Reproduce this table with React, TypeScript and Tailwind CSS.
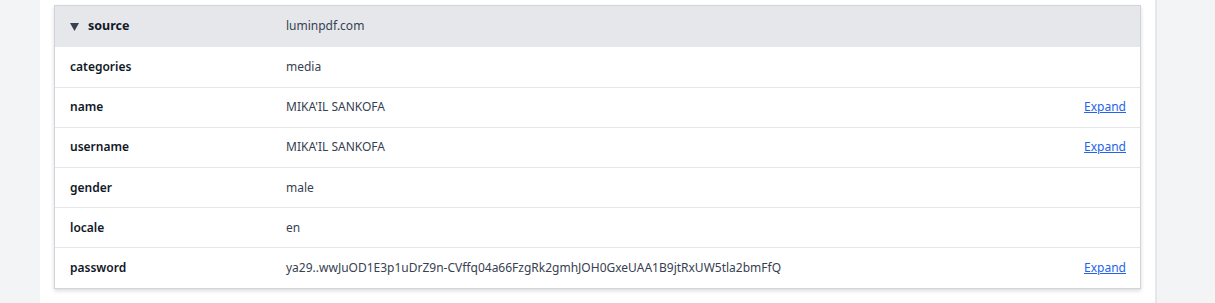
import React from "react";

type Row = { key: string; value: string; expand?: boolean };

const rows: Row[] = [
  { key: "categories", value: "media" },
  { key: "name", value: "MIKA'IL SANKOFA", expand: true },
  { key: "username", value: "MIKA'IL SANKOFA", expand: true },
  { key: "gender", value: "male" },
  { key: "locale", value: "en" },
  {
    key: "password",
    value: "ya29..wwJuOD1E3p1uDrZ9n-CVffq04a66FzgRk2gmhJOH0GxeUAA1B9jtRxUW5tla2bmFfQ",
    expand: true,
  },
];

export default function App() {
  return (
    <div
      className="h-[303px] w-[1215px] overflow-hidden bg-[#f3f4f6] pl-[40px]"
      style={{ fontFamily: '"Noto Sans", "Open Sans", sans-serif' }}
    >
      <div className="h-full w-[1117px] border-r-2 border-[#e5e7eb] bg-white px-[14px] pt-[5px]">
        <div className="border border-[#d1d5db] shadow-[0_2px_4px_rgba(0,0,0,0.14)]">
          <div className="flex h-[40.4px] items-center bg-[#e5e7eb] text-[12px]">
            <div className="flex w-[231px] items-center gap-[9px] pl-[15px] font-bold text-[#111827]">
              <svg width="9" height="8" viewBox="0 0 9 8" className="mt-px">
                <path d="M0 0 H9 L4.5 8 Z" fill="#374151" />
              </svg>
              <span className="text-[12.5px]">source</span>
            </div>
            <div className="text-[#374151]">luminpdf.com</div>
          </div>
          {rows.map((r) => (
            <div
              key={r.key}
              className="flex h-[40.2px] items-center border-t border-[#e5e7eb] text-[12px]"
            >
              <div className="w-[231px] pl-[15px] font-semibold text-[#111827]">{r.key}</div>
              <div className="flex-1 text-[#374151]">{r.value}</div>
              {r.expand && (
                <a href="#" className="pr-[14px] text-[12px] text-[#2563eb] underline">
                  Expand
                </a>
              )}
            </div>
          ))}
        </div>
      </div>
    </div>
  );
}
